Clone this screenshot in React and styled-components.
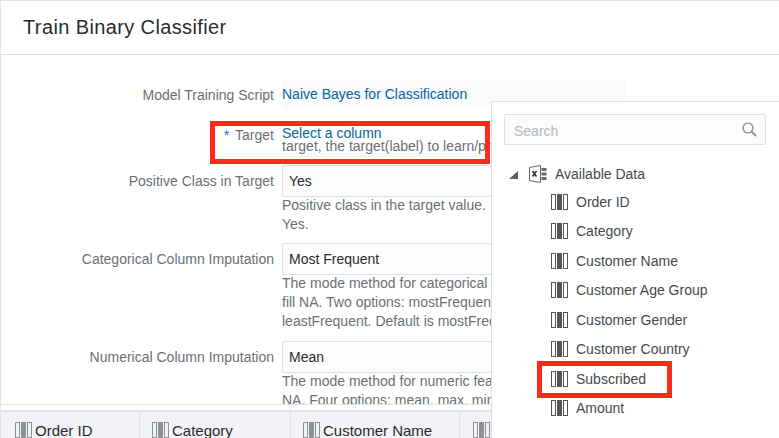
import React from "react";
import styled, { createGlobalStyle } from "styled-components";

const Global = createGlobalStyle`
  html, body { margin: 0; padding: 0; background: #fff; }
  body { font-family: "Liberation Sans", Arial, sans-serif; }
`;

const Page = styled.div`
  position: relative;
  width: 779px;
  height: 438px;
  overflow: hidden;
  display: flex;
  flex-direction: column;
  box-sizing: border-box;
  border-top: 1px solid #dfe4ea;
  border-left: 1px solid #dfe4ea;
  background: #fff;
`;

const Header = styled.div`
  flex: none;
  height: 53px;
  padding-left: 22px;
  display: flex;
  align-items: center;
  border-bottom: 1px solid #d9dfe3;
  font-size: 20px;
  color: #2b2b2b;
  letter-spacing: 0.38px;
`;

const Form = styled.div`
  flex: 1;
  min-height: 0;
  overflow: hidden;
  padding-top: 24px;
`;

const Row = styled.div`
  display: grid;
  grid-template-columns: 273px 1fr;
  column-gap: 8px;
  margin-top: ${(p) => p.$top || 0}px;
`;

const Label = styled.div`
  text-align: right;
  font-size: 14px;
  line-height: 19px;
  padding-top: ${(p) => p.$pad ?? 7}px;
  color: #6b6f73;
`;

const Star = styled.span`
  color: #0572ce;
  margin-right: 6px;
`;

const ValueCol = styled.div`
  min-width: 0;
`;

const ScriptValue = styled.div`
  width: 344px;
  height: 31px;
  line-height: 31px;
  background: #f9fbfd;
  font-size: 14px;
  color: #04659f;
`;

const LinkValue = styled.div`
  font-size: 14px;
  line-height: 14px;
  margin-bottom: -3px;
  color: #04659f;
`;

const Select = styled.div`
  box-sizing: border-box;
  width: 300px;
  height: 32px;
  line-height: 30px;
  padding-left: 6px;
  margin-bottom: -1px;
  font-size: 14px;
  color: #2b2b2b;
  background: #fbfcfd;
  border: 1px solid #d9e1e7;
  border-radius: 2px;
`;

const Hint = styled.div`
  white-space: nowrap;
  font-size: 14px;
  line-height: 19px;
  color: #6b6f73;
`;

const TableHead = styled.div`
  flex: none;
  height: 34px;
  box-sizing: border-box;
  border-top: 1px solid #e4e8ec;
  background: #fff;
  display: flex;
  padding-top: 5px;
`;

const HeadCells = styled.div`
  flex: 1;
  display: flex;
  background: #f1f3f6;
  border-top: 2px solid #dfe3e8;
`;

const HeadCell = styled.div`
  flex: none;
  box-sizing: border-box;
  width: ${(p) => p.$w}px;
  padding: 10px 0 0 ${(p) => p.$pad}px;
  display: flex;
  align-items: flex-start;
  gap: 3px;
  border-right: 1px solid #dde1e6;
  font-size: 15px;
  line-height: 18px;
  color: #2b2b2b;
  white-space: nowrap;
`;

const Picker = styled.div`
  position: absolute;
  left: 490px;
  top: 100px;
  width: 300px;
  height: 350px;
  box-sizing: border-box;
  padding: 12px 0 0 12px;
  background: #fff;
  border: 1px solid #dcdfe2;
`;

const SearchBox = styled.div`
  box-sizing: border-box;
  width: 262px;
  height: 31px;
  display: flex;
  align-items: center;
  justify-content: space-between;
  padding: 2px 8px 0 9px;
  background: #fbfcfd;
  border: 1px solid #d9e1e7;
  border-radius: 2px;
  font-size: 14px;
  color: #b5b8bb;
`;

const Tree = styled.div`
  margin-top: 15px;
`;

const RootRow = styled.div`
  display: flex;
  align-items: center;
  height: 27px;
  padding-left: 5px;
  font-size: 14px;
  color: #45494c;
`;

const Caret = styled.span`
  width: 0;
  height: 0;
  margin-right: 11px;
  margin-top: 3px;
  border-left: 9px solid transparent;
  border-bottom: 8px solid #5f6264;
`;

const Item = styled.div`
  display: flex;
  align-items: center;
  height: 29.5px;
  padding-left: 47px;
  gap: 8px;
  font-size: 14px;
  color: #45494c;
  white-space: nowrap;
`;

const Callout = styled.div`
  position: absolute;
  box-sizing: border-box;
  left: ${(p) => p.$x}px;
  top: ${(p) => p.$y}px;
  width: ${(p) => p.$w}px;
  height: ${(p) => p.$h}px;
  border: 5px solid #ff2a1c;
  pointer-events: none;
`;

const ColumnIcon = ({ color = "#55585b" }) => (
  <svg width="17" height="16" viewBox="0 0 17 16" style={{ flex: "none" }}>
    <rect x="0.5" y="0.5" width="4" height="15" fill="none" stroke={color} />
    <rect x="6" y="0" width="5" height="16" fill={color} />
    <rect x="12.5" y="0.5" width="4" height="15" fill="none" stroke={color} />
  </svg>
);

const WorkbookIcon = () => (
  <svg width="18" height="18" viewBox="0 0 18 18" style={{ marginRight: 8, flex: "none" }}>
    <path d="M0.5 2.5 L11.5 0.5 V17.5 L0.5 15.5 Z" fill="none" stroke="#66696c" />
    <path d="M3.5 6 L7.5 11.5 M7.5 6 L3.5 11.5" stroke="#333" strokeWidth="1.6" />
    <rect x="12.5" y="3" width="5" height="3" fill="#66696c" />
    <rect x="12.5" y="7.5" width="5" height="3" fill="#66696c" />
    <rect x="12.5" y="12" width="5" height="3" fill="#66696c" />
  </svg>
);

const SearchIcon = () => (
  <svg width="15" height="15" viewBox="0 0 15 15" style={{ marginTop: -2 }}>
    <circle cx="6" cy="6" r="4.9" fill="none" stroke="#8b8e90" strokeWidth="1.4" />
    <path d="M9.6 9.6 L14 14" stroke="#8b8e90" strokeWidth="1.8" />
  </svg>
);

const columns = [
  "Order ID",
  "Category",
  "Customer Name",
  "Customer Age Group",
  "Customer Gender",
  "Customer Country",
  "Subscribed",
  "Amount",
];

const headCells = [
  { name: "Order ID", w: 139, pad: 14 },
  { name: "Category", w: 151, pad: 12 },
  { name: "Customer Name", w: 169, pad: 12 },
  { name: "Customer Age Group", w: 320, pad: 13 },
];

const App = () => (
  <>
    <Global />
    <Page>
      <Header>Train Binary Classifier</Header>
      <Form>
        <Row>
          <Label>Model Training Script</Label>
          <ValueCol>
            <ScriptValue>Naive Bayes for Classification</ScriptValue>
          </ValueCol>
        </Row>
        <Row $top={16}>
          <Label $pad={0}>
            <Star>*</Star>Target
          </Label>
          <ValueCol>
            <LinkValue>Select a column</LinkValue>
            <Hint>target, the target(label) to learn/predict</Hint>
          </ValueCol>
        </Row>
        <Row $top={9}>
          <Label>Positive Class in Target</Label>
          <ValueCol>
            <Select>Yes</Select>
            <Hint>Positive class in the target value.</Hint>
            <Hint>Yes.</Hint>
          </ValueCol>
        </Row>
        <Row $top={9}>
          <Label>Categorical Column Imputation</Label>
          <ValueCol>
            <Select>Most Frequent</Select>
            <Hint>The mode method for categorical features to</Hint>
            <Hint>fill NA. Two options: mostFrequent and</Hint>
            <Hint>leastFrequent. Default is mostFrequent.</Hint>
          </ValueCol>
        </Row>
        <Row $top={10}>
          <Label>Numerical Column Imputation</Label>
          <ValueCol>
            <Select>Mean</Select>
            <Hint>The mode method for numeric features to fill</Hint>
            <Hint>NA. Four options: mean, max, min, median.</Hint>
          </ValueCol>
        </Row>
      </Form>
      <TableHead>
        <HeadCells>
          {headCells.map((c) => (
            <HeadCell key={c.name} $w={c.w} $pad={c.pad}>
              <ColumnIcon color="#8d9094" />
              {c.name}
            </HeadCell>
          ))}
        </HeadCells>
      </TableHead>
      <Picker>
        <SearchBox>
          Search
          <SearchIcon />
        </SearchBox>
        <Tree>
          <RootRow>
            <Caret />
            <WorkbookIcon />
            Available Data
          </RootRow>
          {columns.map((c) => (
            <Item key={c}>
              <ColumnIcon />
              {c}
            </Item>
          ))}
        </Tree>
      </Picker>
      <Callout $x={209} $y={120} $w={280} $h={43} />
      <Callout $x={536} $y={360} $w={135} $h={37} />
    </Page>
  </>
);

export default App;
